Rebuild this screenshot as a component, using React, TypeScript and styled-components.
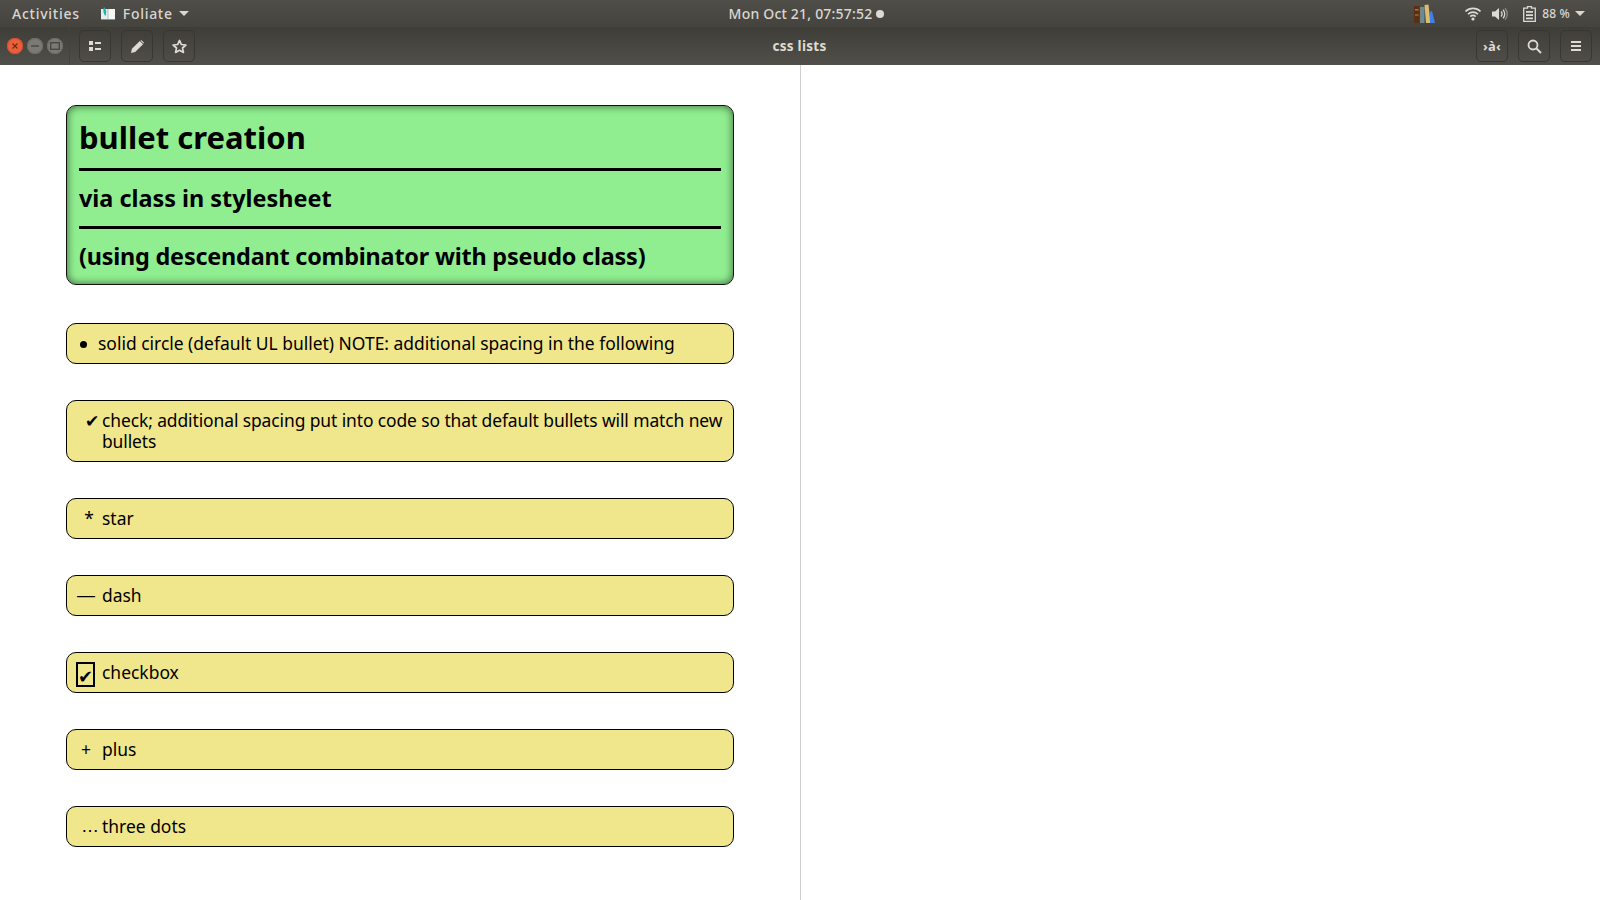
import React from "react";
import styled, { createGlobalStyle } from "styled-components";

const font = `"Noto Sans", "Open Sans", sans-serif`;

const GlobalStyle = createGlobalStyle`
  html, body {
    margin: 0;
    padding: 0;
    height: 100%;
    overflow: hidden;
    background: #fff;
    font-family: ${font};
  }
`;

const Page = styled.div`
  width: 1600px;
  height: 900px;
  display: flex;
  flex-direction: column;
  overflow: hidden;
`;

const TopBar = styled.header`
  height: 27px;
  flex: none;
  display: grid;
  grid-template-columns: 1fr auto 1fr;
  align-items: center;
  padding: 0 12px;
  background: linear-gradient(#504e49, #45433e);
  color: #d9d7d0;
  font-size: 14px;
  font-weight: 500;
  letter-spacing: 0.2px;
`;

const TopLeft = styled.div`
  display: flex;
  align-items: center;
`;

const Activities = styled.span`
  margin-right: 21px;
  letter-spacing: 0.75px;
`;

const AppName = styled.span`
  margin: 0 6px 0 8px;
  letter-spacing: 0.7px;
`;

const Caret = styled.span`
  display: inline-block;
  width: 0;
  height: 0;
  border-left: 5px solid transparent;
  border-right: 5px solid transparent;
  border-top: 5px solid #d9d7d0;
`;

const Clock = styled.div`
  display: flex;
  align-items: center;
  gap: 4px;
  margin-left: 13px;
`;

const Dot = styled.span`
  width: 8px;
  height: 8px;
  border-radius: 50%;
  background: #dcdad5;
`;

const TopRight = styled.div`
  display: flex;
  align-items: center;
  justify-content: flex-end;
  margin-right: 3px;
`;

const Tray = styled.span<{ $gap: number }>`
  display: flex;
  margin-right: ${(p) => p.$gap}px;
`;

const Percent = styled.span`
  font-size: 12px;
  margin-right: 5px;
`;

const TitleBar = styled.div`
  height: 38px;
  flex: none;
  display: grid;
  grid-template-columns: 1fr auto 1fr;
  align-items: center;
  background: linear-gradient(#3e3d38, #514f49);
  color: #dfdbd2;
`;

const TitleLeft = styled.div`
  display: flex;
  align-items: center;
  height: 100%;
`;

const WindowControls = styled.div`
  display: flex;
  align-items: center;
  gap: 4px;
  height: 100%;
  padding: 0 6px 0 7px;
  border-right: 1px solid #45433e;
  margin-right: 9px;
`;

const WindowButton = styled.span<{ $close?: boolean }>`
  width: 16px;
  height: 16px;
  border-radius: 50%;
  display: flex;
  align-items: center;
  justify-content: center;
  background: ${(p) => (p.$close ? "#e9603a" : "#7b7a73")};
  box-shadow: inset 0 0 0 1px ${(p) => (p.$close ? "#d2502c" : "#6d6c66")};
`;

const ToolGroup = styled.div`
  display: flex;
  gap: 10px;
`;

const ToolButton = styled.span`
  width: 32px;
  height: 32px;
  box-sizing: border-box;
  border: 1px solid #383733;
  border-radius: 5px;
  display: flex;
  align-items: center;
  justify-content: center;
`;

const ToolGlyph = styled.span`
  font-size: 13px;
  font-weight: 700;
  letter-spacing: 0.2px;
  line-height: 1;
  color: #dfdbd2;
`;

const Title = styled.div`
  font-size: 13.5px;
  font-weight: 700;
  letter-spacing: 0.3px;
  margin-left: -1px;
`;

const TitleRight = styled(ToolGroup)`
  justify-content: flex-end;
  margin-right: 8px;
`;

const Book = styled.div`
  flex: 1;
  display: grid;
  grid-template-columns: 801px 1fr;
  min-height: 0;
`;

const LeftPage = styled.main`
  box-sizing: border-box;
  border-right: 1px solid #cfcfcf;
  padding: 40px 66px 0 66px;
`;

const Banner = styled.section`
  box-sizing: border-box;
  width: 668px;
  height: 180px;
  padding: 0 12px;
  background: #90ee90;
  border: 1px solid #111;
  border-radius: 10px;
  box-shadow: inset 0 0 9px rgba(0, 0, 0, 0.6);
  margin-bottom: 38px;
`;

const BannerLine = styled.div<{ $size: number; $height: number; $rule?: boolean; $spacing?: number; $lift?: number }>`
  box-sizing: border-box;
  height: ${(p) => p.$height}px;
  padding-bottom: ${(p) => p.$lift ?? 0}px;
  display: flex;
  align-items: center;
  font-size: ${(p) => p.$size}px;
  font-weight: 700;
  letter-spacing: ${(p) => p.$spacing ?? 0}px;
  color: #000;
  border-bottom: ${(p) => (p.$rule ? "3px solid #000" : "none")};
`;

const List = styled.ul`
  list-style: none;
  margin: 0;
  padding: 0;
  display: flex;
  flex-direction: column;
  gap: 36px;
`;

const Item = styled.li`
  box-sizing: border-box;
  width: 668px;
  min-height: 41px;
  display: grid;
  grid-template-columns: 35px 1fr;
  padding: 9px 2px 9px 0;
  background: #f0e68c;
  border: 1px solid #000;
  border-radius: 10px;
  color: #000;
  font-size: 17.46px;
  line-height: 21px;
`;

const Bullet = styled.span<{ $shift?: number; $wide?: boolean }>`
  text-align: center;
  padding-left: 3px;
  margin-left: ${(p) => p.$shift ?? 0}px;
  font-family: ${(p) => (p.$wide ? `"Liberation Sans", sans-serif` : "inherit")};
  font-size: ${(p) => (p.$wide ? "18px" : "inherit")};
`;

const Disc = styled.span`
  width: 7px;
  height: 7px;
  margin: 8px 0 0 13px;
  border-radius: 50%;
  background: #000;
`;

const ItemText = styled.span<{ $shift?: number; $spacing?: number }>`
  margin-left: ${(p) => p.$shift ?? 0}px;
  letter-spacing: ${(p) => p.$spacing ?? 0}px;
`;

const CheckBox = styled.span`
  box-sizing: border-box;
  width: 19px;
  height: 25px;
  margin: 0 0 -4px 9px;
  border: 2px solid #000;
  display: flex;
  align-items: center;
  justify-content: center;
  font-size: 18px;
  padding-top: 3px;
`;

const RightPage = styled.div`
  background: #fff;
`;

const Icon = styled.svg`
  display: block;
  flex: none;
`;

const Close = () => (
  <Icon width="8" height="8" viewBox="0 0 8 8">
    <path d="M1.5 1.5l5 5M6.5 1.5l-5 5" stroke="#6b2a18" strokeWidth="1.1" />
  </Icon>
);
const Minimize = () => (
  <Icon width="10" height="10" viewBox="0 0 10 10">
    <path d="M1 5h8" stroke="#45443f" strokeWidth="1.3" />
  </Icon>
);
const Maximize = () => (
  <Icon width="10" height="8" viewBox="0 0 10 8">
    <rect x="0.7" y="0.7" width="8.6" height="6.6" fill="none" stroke="#45443f" strokeWidth="1.3" />
  </Icon>
);
const FoliateLogo = () => (
  <Icon width="14" height="13" viewBox="0 0 14 13">
    <rect x="0" y="2" width="14" height="10" fill="#e6eeec" />
    <rect x="7" y="2" width="7" height="10" fill="#f6f8f7" />
    <rect x="0" y="12" width="14" height="1" fill="#2fb5ad" />
    <path d="M3 0c2 2 3 4 1.500 9C2.500 7 1.500 3 3 0z" fill="#14b8ae" />
    <rect x="6.500" y="2" width="1" height="10" fill="#a9bcbb" />
  </Icon>
);
const BooksLogo = () => (
  <Icon width="21" height="20" viewBox="0 0 21 20">
    <rect x="0" y="2" width="5.500" height="17" fill="#5c2e12" />
    <rect x="1" y="5" width="3.500" height="1.500" fill="#a9773c" />
    <rect x="1" y="10" width="3.500" height="2" fill="#8a5a2a" />
    <rect x="6" y="3" width="4.500" height="16" fill="#6f8a8f" />
    <path d="M10.500 1l4-.500 2 18.500h-4.500z" fill="#dcbc6e" />
    <path d="M15.500 8l2.500-1 3 12h-5z" fill="#3f7fe6" />
  </Icon>
);
const Wifi = () => (
  <Icon width="16" height="14" viewBox="0 0 16 14">
    <path d="M.5 4.500a10.500 10.500 0 0 1 15 0M3 7.200a7 7 0 0 1 10 0M5.300 9.600a3.600 3.600 0 0 1 5.400 0" fill="none" stroke="#dcdad5" strokeWidth="1.600" />
    <circle cx="8" cy="12" r="1.600" fill="#dcdad5" />
  </Icon>
);
const Speaker = () => (
  <Icon width="16" height="14" viewBox="0 0 16 14">
    <path d="M0 4.500h3L7 1v12L3 9.500H0z" fill="#dcdad5" />
    <path d="M9 4.500a3.500 3.500 0 0 1 0 5M11 2.800a6 6 0 0 1 0 8.400" fill="none" stroke="#dcdad5" strokeWidth="1.300" />
    <path d="M13 1.200a8.500 8.500 0 0 1 0 11.600" fill="none" stroke="#8d8b85" strokeWidth="1.300" />
  </Icon>
);
const Battery = () => (
  <Icon width="13" height="16" viewBox="0 0 13 16">
    <path d="M4.500.7h4v1.500h3.800v13.100H.7V2.200h3.800z" fill="none" stroke="#dcdad5" strokeWidth="1.300" />
    <path d="M3 5h7v1.800H3zM3 8.200h7V10H3zM3 11.400h7v1.800H3z" fill="#dcdad5" />
  </Icon>
);
const Sidebar = () => (
  <Icon width="12" height="10" viewBox="0 0 12 10">
    <path d="M0 0h4v4H0zM0 6h4v4H0zM6 1h6v2H6zM6 7h6v2H6z" fill="#dfdbd2" />
  </Icon>
);
const Pencil = () => (
  <Icon width="13" height="13" viewBox="0 0 14 14">
    <path d="M0 14l1-4.500L9.500 1 13 4.500 4.500 13z" fill="#dfdbd2" />
    <path d="M10.200.5L11 0l3 3-.7.800z" fill="#dfdbd2" />
  </Icon>
);
const Star = () => (
  <Icon width="15" height="15" viewBox="0 0 16 16">
    <path d="M8 1.500l2 4.400 4.800.500-3.600 3.200 1 4.700L8 11.900l-4.200 2.400 1-4.700L1.200 6.400 6 5.900z" fill="none" stroke="#dfdbd2" strokeWidth="1.800" strokeLinejoin="round" />
  </Icon>
);
const Search = () => (
  <Icon width="15" height="15" viewBox="0 0 15 15">
    <circle cx="6" cy="6" r="4.500" fill="none" stroke="#dfdbd2" strokeWidth="1.800" />
    <path d="M9.500 9.500l4.500 4.500" stroke="#dfdbd2" strokeWidth="2" />
  </Icon>
);
const Menu = () => (
  <Icon width="10" height="10" viewBox="0 0 10 10">
    <path d="M0 0h10v2H0zM0 4h10v2H0zM0 8h10v2H0z" fill="#dfdbd2" />
  </Icon>
);

const App: React.FC = () => {
  return (
    <Page>
      <GlobalStyle />
      <TopBar>
        <TopLeft>
          <Activities>Activities</Activities>
          <FoliateLogo />
          <AppName>Foliate</AppName>
          <Caret />
        </TopLeft>
        <Clock>
          Mon Oct 21, 07:57:52
          <Dot />
        </Clock>
        <TopRight>
          <Tray $gap={30}><BooksLogo /></Tray>
          <Tray $gap={11}><Wifi /></Tray>
          <Tray $gap={15}><Speaker /></Tray>
          <Tray $gap={6}><Battery /></Tray>
          <Percent>88 %</Percent>
          <Caret />
        </TopRight>
      </TopBar>
      <TitleBar>
        <TitleLeft>
          <WindowControls>
            <WindowButton $close><Close /></WindowButton>
            <WindowButton><Minimize /></WindowButton>
            <WindowButton><Maximize /></WindowButton>
          </WindowControls>
          <ToolGroup>
            <ToolButton><Sidebar /></ToolButton>
            <ToolButton><Pencil /></ToolButton>
            <ToolButton><Star /></ToolButton>
          </ToolGroup>
        </TitleLeft>
        <Title>css lists</Title>
        <TitleRight>
          <ToolButton><ToolGlyph>›à‹</ToolGlyph></ToolButton>
          <ToolButton><Search /></ToolButton>
          <ToolButton><Menu /></ToolButton>
        </TitleRight>
      </TitleBar>
      <Book>
        <LeftPage>
          <Banner>
            <BannerLine $size={31} $height={65} $rule>bullet creation</BannerLine>
            <BannerLine $size={23.4} $height={58} $rule $lift={2}>via class in stylesheet</BannerLine>
            <BannerLine $size={23.4} $height={53} $spacing={-0.2}>(using descendant combinator with pseudo class)</BannerLine>
          </Banner>
          <List>
            <Item>
              <Disc />
              <ItemText $shift={-4}>solid circle (default UL bullet) NOTE: additional spacing in the following</ItemText>
            </Item>
            <Item>
              <Bullet $shift={12}>✔</Bullet>
              <ItemText $spacing={-0.1}>check; additional spacing put into code so that default bullets will match new bullets</ItemText>
            </Item>
            <Item>
              <Bullet $shift={6}>*</Bullet>
              <ItemText>star</ItemText>
            </Item>
            <Item>
              <Bullet $wide>—</Bullet>
              <ItemText>dash</ItemText>
            </Item>
            <Item>
              <CheckBox>✔</CheckBox>
              <ItemText>checkbox</ItemText>
            </Item>
            <Item>
              <Bullet>+</Bullet>
              <ItemText>plus</ItemText>
            </Item>
            <Item>
              <Bullet $wide $shift={8}>…</Bullet>
              <ItemText>three dots</ItemText>
            </Item>
          </List>
        </LeftPage>
        <RightPage />
      </Book>
    </Page>
  );
};

export default App;
